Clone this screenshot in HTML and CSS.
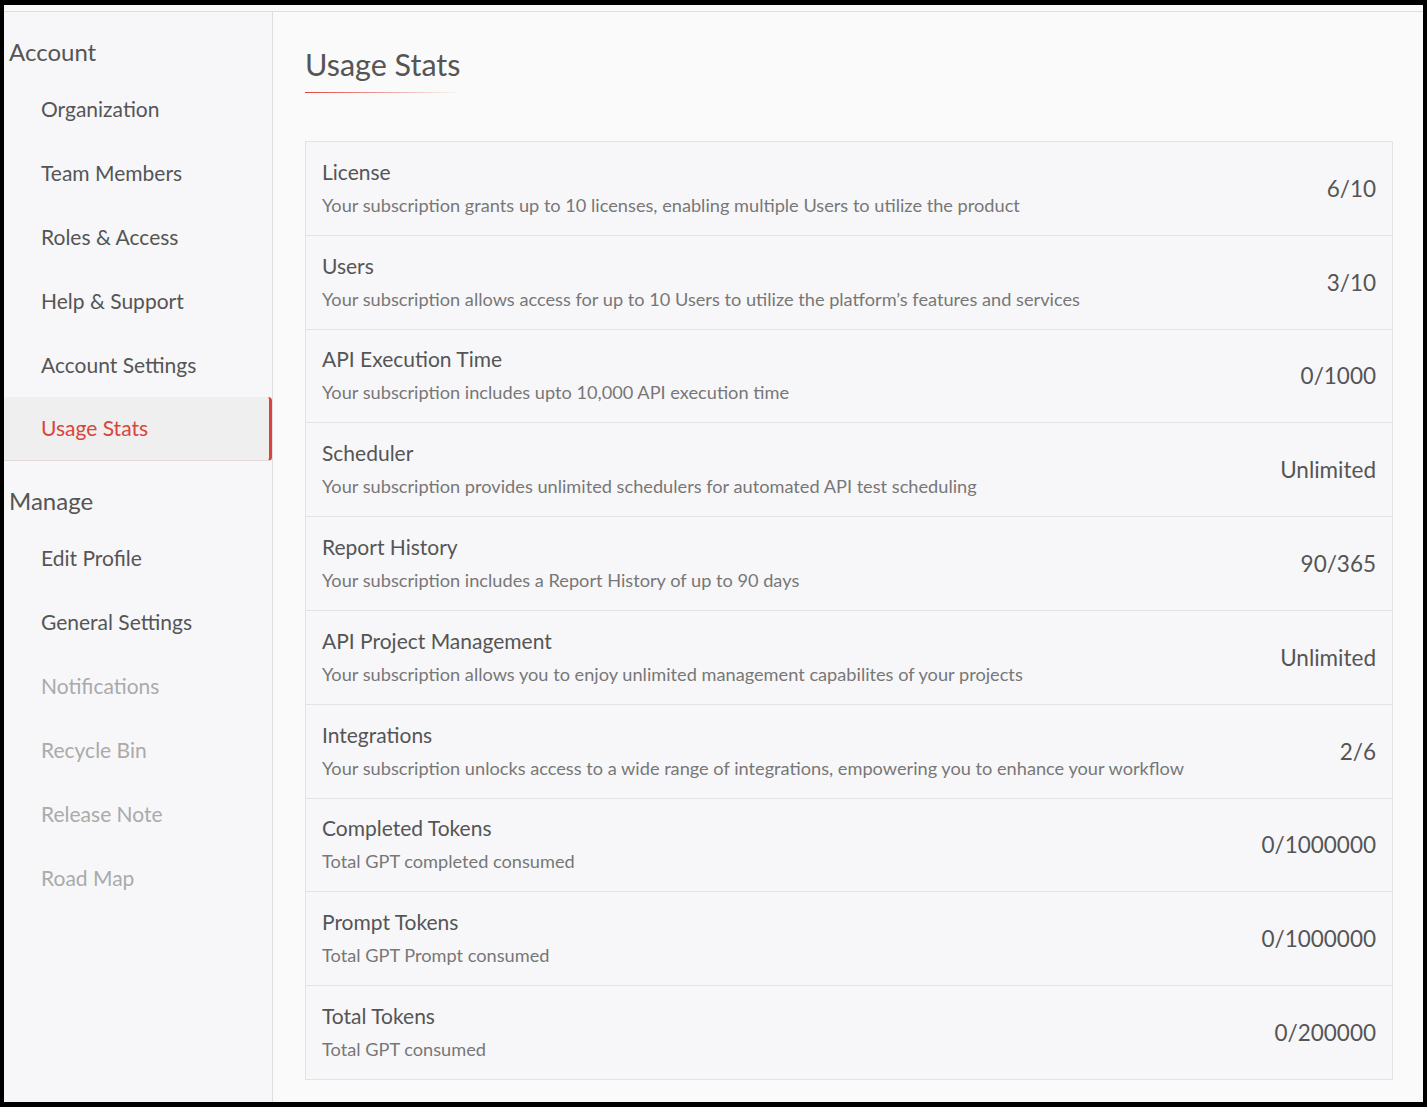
FILE: index.html
```html
<!DOCTYPE html>
<html lang="en">
<head>
<meta charset="utf-8">
<title>Usage Stats</title>
<link rel="stylesheet" href="styles.css">
</head>
<body>
<div class="app">
  <div class="topstrip"></div>
  <div class="layout">
    <aside class="sidebar">
      <div class="group-title">Account</div>
      <a class="nav-item">Organization</a>
      <a class="nav-item">Team Members</a>
      <a class="nav-item">Roles &amp; Access</a>
      <a class="nav-item">Help &amp; Support</a>
      <a class="nav-item">Account Settings</a>
      <a class="nav-item active">Usage Stats</a>
      <div class="group-title">Manage</div>
      <a class="nav-item">Edit Profile</a>
      <a class="nav-item">General Settings</a>
      <a class="nav-item disabled">Notifications</a>
      <a class="nav-item disabled">Recycle Bin</a>
      <a class="nav-item disabled">Release Note</a>
      <a class="nav-item disabled">Road Map</a>
    </aside>
    <main class="content">
      <h1 class="page-title">Usage Stats</h1>
      <div class="stats-card">
        <div class="stat-row">
          <div class="stat-text"><div class="stat-title">License</div><div class="stat-desc">Your subscription grants up to 10 licenses, enabling multiple Users to utilize the product</div></div>
          <div class="stat-value">6/10</div>
        </div>
        <div class="stat-row">
          <div class="stat-text"><div class="stat-title">Users</div><div class="stat-desc">Your subscription allows access for up to 10 Users to utilize the platform’s features and services</div></div>
          <div class="stat-value">3/10</div>
        </div>
        <div class="stat-row">
          <div class="stat-text"><div class="stat-title">API Execution Time</div><div class="stat-desc">Your subscription includes upto 10,000 API execution time</div></div>
          <div class="stat-value">0/1000</div>
        </div>
        <div class="stat-row">
          <div class="stat-text"><div class="stat-title">Scheduler</div><div class="stat-desc">Your subscription provides unlimited schedulers for automated API test scheduling</div></div>
          <div class="stat-value">Unlimited</div>
        </div>
        <div class="stat-row">
          <div class="stat-text"><div class="stat-title">Report History</div><div class="stat-desc">Your subscription includes a Report History of up to 90 days</div></div>
          <div class="stat-value">90/365</div>
        </div>
        <div class="stat-row">
          <div class="stat-text"><div class="stat-title">API Project Management</div><div class="stat-desc">Your subscription allows you to enjoy unlimited management capabilites of your projects</div></div>
          <div class="stat-value">Unlimited</div>
        </div>
        <div class="stat-row">
          <div class="stat-text"><div class="stat-title">Integrations</div><div class="stat-desc">Your subscription unlocks access to a wide range of integrations, empowering you to enhance your workflow</div></div>
          <div class="stat-value">2/6</div>
        </div>
        <div class="stat-row">
          <div class="stat-text"><div class="stat-title">Completed Tokens</div><div class="stat-desc">Total GPT completed consumed</div></div>
          <div class="stat-value">0/1000000</div>
        </div>
        <div class="stat-row">
          <div class="stat-text"><div class="stat-title">Prompt Tokens</div><div class="stat-desc">Total GPT Prompt consumed</div></div>
          <div class="stat-value">0/1000000</div>
        </div>
        <div class="stat-row">
          <div class="stat-text"><div class="stat-title">Total Tokens</div><div class="stat-desc">Total GPT consumed</div></div>
          <div class="stat-value">0/200000</div>
        </div>
      </div>
    </main>
  </div>
</div>
</body>
</html>
```
FILE: styles.css
```css
* { box-sizing: border-box; }
html, body { margin: 0; height: 100%; }
body {
  background: #000;
  padding: 5px 4px 5px 4px;
  font-family: Lato, "Liberation Sans", sans-serif;
  color: #555;
}
.app {
  height: 100%;
  background: #fafafa;
  display: flex;
  flex-direction: column;
}
.topstrip {
  height: 7px;
  flex: none;
  background: #fafafa;
  border-bottom: 1px solid #dedede;
}
.layout {
  flex: 1;
  display: flex;
  min-height: 0;
}
.sidebar {
  width: 269px;
  flex: none;
  background: #f7f7f9;
  border-right: 1px solid #e2dcdc;
  display: flex;
  flex-direction: column;
}
.group-title {
  height: 65px;
  padding: 27px 0 0 5px;
  font-size: 24px;
  line-height: 26px;
  color: #555;
}
.nav-item {
  display: block;
  height: 64px;
  line-height: 63px;
  padding-left: 37px;
  font-size: 21px;
  color: #555;
}
.nav-item.disabled { color: #aaa; }
.nav-item.active {
  color: #d9443c;
  background: #efefef;
  border-bottom: 1px solid #e2dada;
  border-right: 3px solid #d9443c;
  border-radius: 0 4px 4px 0;
  line-height: 62px;
}
.content {
  flex: 1;
  background: #fafafa;
  padding: 0 30px 0 32px;
}
.page-title {
  display: inline-block;
  margin: 0;
  padding: 36px 0 13px;
  font-size: 30.5px;
  line-height: 32px;
  font-weight: 400;
  color: #555;
  position: relative;
}
.page-title::after {
  content: "";
  position: absolute;
  left: 0;
  right: 0;
  bottom: 0;
  height: 1px;
  background: linear-gradient(to right, #e0453c, rgba(224, 69, 60, 0));
}
.stats-card {
  margin-top: 48px;
  border: 1px solid #e3e3e6;
  background: #f7f7f9;
}
.stat-row {
  height: 93.8px;
  display: flex;
  align-items: center;
  justify-content: space-between;
  padding: 0 16px;
  border-bottom: 1px solid #e3e3e6;
}
.stat-row:last-child { border-bottom: none; height: 92.8px; }
.stat-title {
  font-size: 21px;
  line-height: 28px;
  color: #555;
}
.stat-desc {
  margin-top: 5px;
  font-size: 18.2px;
  line-height: 28px;
  color: #777;
}
.stat-value {
  font-size: 22.5px;
  color: #555;
}
```
